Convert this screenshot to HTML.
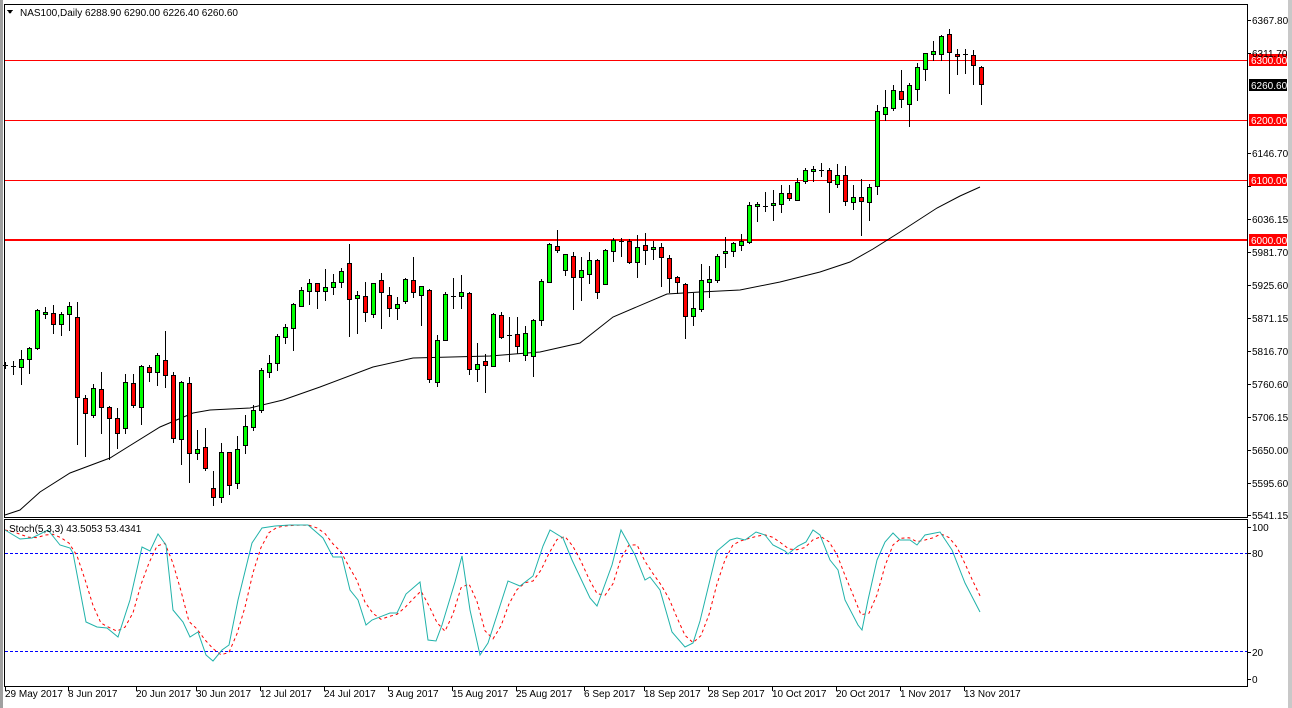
<!DOCTYPE html>
<html><head><meta charset="utf-8"><style>
html,body{margin:0;padding:0;background:#fff;}
body{width:1292px;height:708px;overflow:hidden;position:relative;font-family:"Liberation Sans","DejaVu Sans",sans-serif;}
svg{position:absolute;left:0;top:0;}
text{font-family:"Liberation Sans","DejaVu Sans",sans-serif;font-size:10px;fill:#000;}
</style></head><body>
<svg id="s" width="1292" height="708" viewBox="0 0 1292 708" xmlns="http://www.w3.org/2000/svg" shape-rendering="crispEdges">
<rect x="0" y="0" width="1292" height="708" fill="#fff"/>
<rect x="0" y="0" width="3" height="708" fill="#a0a0a0"/>
<rect x="1288" y="0" width="4" height="708" fill="#c8c8c8"/>
<rect x="4.5" y="4.5" width="1243" height="513" fill="none" stroke="#000"/>
<rect x="4.5" y="519.5" width="1243" height="167" fill="none" stroke="#000"/>
<line x1="5" y1="60.5" x2="1247" y2="60.5" stroke="#f00"/>
<line x1="5" y1="120.5" x2="1247" y2="120.5" stroke="#f00"/>
<line x1="5" y1="180.5" x2="1247" y2="180.5" stroke="#f00"/>
<line x1="5" y1="240" x2="1247" y2="240" stroke="#f00" stroke-width="2"/>
<line x1="5" y1="553.5" x2="1247" y2="553.5" stroke="#0000ff" stroke-dasharray="3,2"/>
<line x1="5" y1="651.5" x2="1247" y2="651.5" stroke="#0000ff" stroke-dasharray="3,2"/>
<g id="ma"></g>
<g id="c"></g>
<g id="st"></g>
<polygon points="7,10 13,10 10,14" fill="#000"/>
<text x="20" y="16">NAS100,Daily  6288.90 6290.00 6226.40 6260.60</text>
<text x="9" y="532">Stoch(5,3,3) 43.5053 53.4341</text>
<g id="ax"></g>
<rect x="1249" y="54" width="38" height="12" fill="#f00"/><text x="1251" y="64" style="fill:#fff">6300.00</text>
<rect x="1249" y="79" width="38" height="12" fill="#000"/><text x="1251" y="89" style="fill:#fff">6260.60</text>
<rect x="1249" y="114" width="38" height="12" fill="#f00"/><text x="1251" y="124" style="fill:#fff">6200.00</text>
<rect x="1249" y="174" width="38" height="12" fill="#f00"/><text x="1251" y="184" style="fill:#fff">6100.00</text>
<rect x="1249" y="234" width="38" height="12" fill="#f00"/><text x="1251" y="244" style="fill:#fff">6000.00</text>
<text x="1252" y="531">100</text>
<text x="1252" y="557">80</text>
<text x="1252" y="656">20</text>
<text x="1252" y="683">0</text>
<g id="dt"></g>
<text x="5" y="697">29 May 2017</text>
<text x="68" y="697">8 Jun 2017</text>
<text x="136" y="697">20 Jun 2017</text>
<text x="196" y="697">30 Jun 2017</text>
<text x="260" y="697">12 Jul 2017</text>
<text x="324" y="697">24 Jul 2017</text>
<text x="388" y="697">3 Aug 2017</text>
<text x="452" y="697">15 Aug 2017</text>
<text x="516" y="697">25 Aug 2017</text>
<text x="584" y="697">6 Sep 2017</text>
<text x="644" y="697">18 Sep 2017</text>
<text x="708" y="697">28 Sep 2017</text>
<text x="772" y="697">10 Oct 2017</text>
<text x="836" y="697">20 Oct 2017</text>
<text x="900" y="697">1 Nov 2017</text>
<text x="964" y="697">13 Nov 2017</text>
<text x="1252" y="24">6367.80</text>
<text x="1252" y="57">6311.70</text>
<text x="1252" y="157">6146.70</text>
<text x="1252" y="223">6036.15</text>
<text x="1252" y="256">5981.70</text>
<text x="1252" y="289">5925.60</text>
<text x="1252" y="322">5871.15</text>
<text x="1252" y="355">5816.70</text>
<text x="1252" y="388">5760.60</text>
<text x="1252" y="421">5706.15</text>
<text x="1252" y="454">5650.00</text>
<text x="1252" y="487">5595.60</text>
<text x="1252" y="519">5541.15</text>
</svg>
<script>
var NS="http://www.w3.org/2000/svg";
function el(p,t,a){var e=document.createElementNS(NS,t);for(var k in a)e.setAttribute(k,a[k]);p.appendChild(e);return e;}
var D=[[362,365,365,368,'d'],[361,366,366,374,'d'],[350,359,367,384,'g'],[347,348,359,373,'g'],[309,310,348,349,'g'],[307,312,314,318,'g'],[305,313,324,333,'r'],[312,314,324,335,'g'],[302,306,314,330,'g'],[302,317,397,444,'r'],
[395,398,413,456,'r'],[384,388,415,417,'g'],[372,389,407,433,'r'],[406,407,418,459,'r'],[408,418,433,448,'r'],[374,382,428,433,'g'],[374,383,405,407,'r'],[365,366,407,424,'g'],[365,367,372,381,'r'],[353,355,372,385,'g'],
[331,360,375,387,'r'],[372,375,438,442,'r'],[381,382,439,464,'g'],[377,383,453,482,'r'],[430,449,453,459,'g'],[428,447,468,470,'r'],[471,488,497,505,'r'],[443,452,497,502,'g'],[452,452,485,494,'r'],[436,449,483,488,'g'],
[415,426,445,453,'g'],[405,410,427,430,'g'],[368,370,410,412,'g'],[355,363,372,377,'g'],[334,336,363,370,'g'],[324,327,337,343,'g'],[303,304,328,350,'g'],[287,290,306,306,'g'],[279,283,291,304,'g'],[283,283,291,308,'r'],
[269,287,291,300,'g'],[274,282,287,294,'g'],[268,271,282,287,'g'],[244,263,299,336,'r'],[291,295,298,333,'g'],[282,296,312,321,'r'],[283,283,314,317,'g'],[273,280,292,328,'r'],[287,295,308,316,'r'],[297,304,308,319,'g'],
[278,279,301,303,'g'],[257,280,292,297,'r'],[286,286,295,325,'g'],[289,290,379,382,'r'],[335,340,382,386,'g'],[292,294,340,340,'g'],[278,296,296,308,'d'],[275,292,296,308,'g'],[292,293,369,374,'r'],[343,364,369,381,'g'],
[354,361,365,392,'r'],[313,314,366,366,'g'],[312,315,337,338,'r'],[317,335,335,361,'d'],[317,334,346,353,'r'],[326,333,355,360,'g'],[319,320,356,376,'g'],[279,281,320,325,'g'],[243,244,282,282,'g'],[230,246,250,252,'r'],
[254,254,270,275,'g'],[252,256,277,309,'r'],[257,270,277,300,'g'],[252,260,274,283,'g'],[259,260,292,298,'r'],[249,250,284,284,'g'],[238,240,251,261,'g'],[238,241,241,256,'d'],[239,241,262,263,'r'],[235,247,262,277,'g'],
[233,245,250,264,'r'],[241,247,249,259,'g'],[243,247,257,286,'r'],[255,258,278,292,'r'],[276,277,282,293,'r'],[283,284,316,338,'r'],[293,308,316,325,'g'],[264,280,309,311,'g'],[266,279,282,297,'g'],[254,256,280,282,'g'],
[237,251,253,267,'g'],[242,243,251,256,'g'],[234,241,245,250,'g'],[202,205,242,243,'g'],[202,204,206,221,'g'],[192,206,206,211,'d'],[190,203,205,220,'g'],[185,193,204,212,'g'],[185,193,198,200,'r'],[178,182,200,200,'g'],
[168,170,181,183,'g'],[166,169,171,181,'g'],[163,170,170,176,'d'],[168,170,182,212,'r'],[164,175,184,187,'g'],[166,175,201,205,'r'],[185,197,202,209,'g'],[179,197,201,235,'r'],[184,187,202,220,'g'],[105,111,186,194,'g'],
[90,107,114,120,'g'],[85,90,108,110,'g'],[70,91,99,107,'r'],[83,85,104,126,'g'],[63,67,89,100,'g'],[53,53,69,80,'g'],[41,51,54,60,'g'],[35,36,54,60,'g'],[29,34,52,93,'r'],[49,54,56,74,'r'],
[49,54,54,73,'d'],[50,55,65,84,'r'],[66,67,84,104,'r']];
var c=document.getElementById('c');
D.forEach(function(d,i){var x=5+8*i;
 el(c,'line',{x1:x+0.5,y1:d[0],x2:x+0.5,y2:d[3]+1,stroke:'#000'});
 if(d[4]=='d'){el(c,'line',{x1:x-2,y1:d[1]+0.5,x2:x+3,y2:d[1]+0.5,stroke:'#000'});}
 else{var h=Math.max(d[2]-d[1],2);el(c,'rect',{x:x-1.5,y:d[1]+0.5,width:4,height:h,fill:d[4]=='g'?'#00ff00':'#ff0000',stroke:'#000'});}
});
var MA=[[5,515],[20,510],[40,492],[70,473],[110,458],[160,427],[193,413],[210,410],[250,408],[283,400],[320,387],[373,367],[413,358],[490,356],[540,352],[580,343],[613,317],[667,294],[700,292],[740,290],[780,282],[820,272],[850,262],[873,249],[900,232],[937,208],[960,196],[980,187]];
el(document.getElementById('ma'),'polyline',{points:MA.map(function(p){return p.join(',')}).join(' '),fill:'none',stroke:'#000','shape-rendering':'auto'});
var K=[[5,530],[20,539],[32,538],[48,530],[60,545],[70,548],[73,553],[86,622],[97,627],[107,628],[118,637],[130,600],[142,547],[150,551],[158,534],[166,545],[173,610],[183,622],[190,637],[198,632],[206,655],[213,661],[222,650],[229,645],[238,600],[252,543],[262,528],[275,526],[290,525],[308,525],[323,538],[333,557],[342,557],[350,590],[358,600],[366,625],[372,620],[390,613],[397,613],[406,594],[420,582],[428,640],[436,641],[442,625],[455,582],[462,556],[470,610],[480,655],[488,643],[508,581],[520,586],[533,576],[543,546],[550,530],[563,538],[572,560],[590,598],[597,606],[612,565],[621,530],[635,555],[645,580],[650,577],[660,590],[672,632],[685,647],[693,643],[700,621],[717,551],[730,540],[737,538],[745,540],[752,535],[756,532],[765,535],[773,545],[785,551],[788,554],[798,546],[806,542],[813,530],[820,535],[830,560],[838,570],[845,600],[858,625],[862,630],[868,600],[877,560],[885,542],[893,533],[900,540],[910,540],[917,545],[925,535],[940,532],[952,550],[965,583],[980,612]];
function ik(x){if(x<=K[0][0])return K[0][1];for(var i=1;i<K.length;i++){if(x<=K[i][0]){var a=K[i-1],b=K[i];return a[1]+(b[1]-a[1])*(x-a[0])/(b[0]-a[0]);}}return K[K.length-1][1];}
var S=[];for(var x=5;x<=981;x+=8){S.push([x,(ik(x)+ik(x-8)+ik(x-16))/3]);}
var st=document.getElementById('st');
el(st,'polyline',{points:S.map(function(p){return p[0]+','+p[1].toFixed(1)}).join(' '),fill:'none',stroke:'#f00','stroke-dasharray':'3,3','shape-rendering':'auto'});
el(st,'polyline',{points:K.map(function(p){return p.join(',')}).join(' '),fill:'none',stroke:'#20b2aa','shape-rendering':'auto'});
var ax=document.getElementById('ax');
[20,53,153,186,219,252,285,318,351,384,417,450,483,515,527,553,652,679].forEach(function(y){el(ax,'line',{x1:1247,y1:y+0.5,x2:1251,y2:y+0.5,stroke:'#000'});});
var dt=document.getElementById('dt');
[5,68,136,196,260,324,388,452,516,584,644,708,772,836,900,964].forEach(function(x){el(dt,'line',{x1:x+0.5,y1:687,x2:x+0.5,y2:691,stroke:'#000'});});
</script>
</body></html>
